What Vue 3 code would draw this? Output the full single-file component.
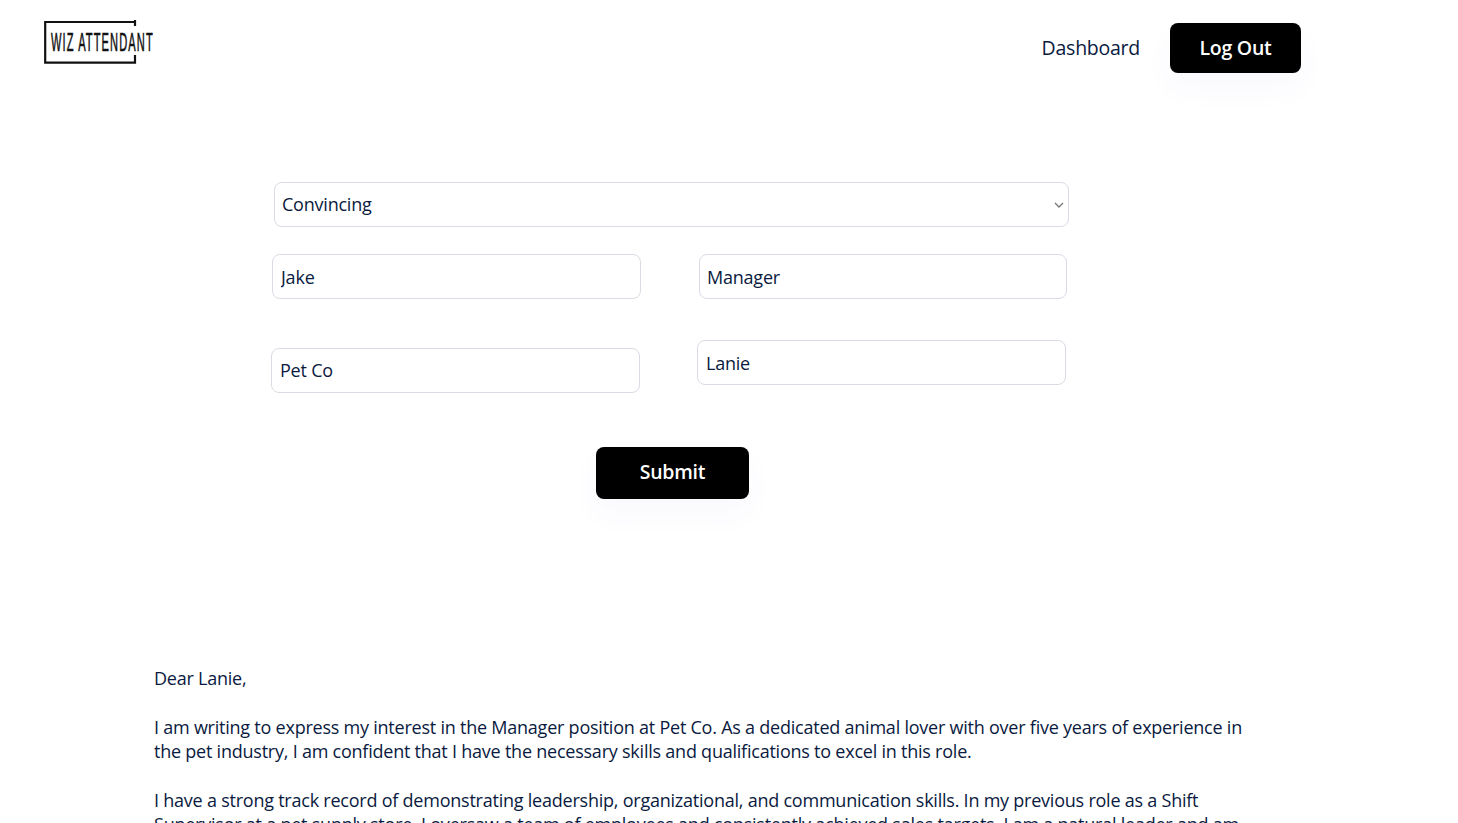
<script setup>
import { ref } from 'vue'
const tone = ref('Convincing')
const name = ref('Jake')
const role = ref('Manager')
const company = ref('Pet Co')
const recipient = ref('Lanie')
const paragraphs = [
  'Dear Lanie,',
  'I am writing to express my interest in the Manager position at Pet Co. As a dedicated animal lover with over five years of experience in the pet industry, I am confident that I have the necessary skills and qualifications to excel in this role.',
  'I have a strong track record of demonstrating leadership, organizational, and communication skills. In my previous role as a Shift Supervisor at a pet supply store, I oversaw a team of employees and consistently achieved sales targets. I am a natural leader and am'
]
</script>

<template>
  <div class="page">
    <header class="nav">
      <a class="logo" href="#">
        <svg class="logo-frame" width="110" height="44" viewBox="0 0 110 44" fill="none" aria-hidden="true">
          <path d="M91 2H1.2V42.6H91V35" stroke="#111" stroke-width="2.2" />
          <path d="M91 0V6" stroke="#111" stroke-width="2.2" />
        </svg>
        <span class="logo-text">WIZ ATTENDANT</span>
      </a>
      <nav class="links">
        <a class="link" href="#">Dashboard</a>
        <button class="btn logout" type="button">Log Out</button>
      </nav>
    </header>

    <form class="form" @submit.prevent>
      <div class="select-wrap">
        <select v-model="tone" class="field select">
          <option>Convincing</option>
          <option>Formal</option>
          <option>Friendly</option>
        </select>
        <svg class="chevron" width="10" height="6" viewBox="0 0 10 6" fill="none" aria-hidden="true">
          <path d="M1 1l4 4 4-4" stroke="#777" stroke-width="1.3" />
        </svg>
      </div>
      <div class="row row-one">
        <input v-model="name" class="field" type="text" />
        <input v-model="role" class="field role" type="text" />
      </div>
      <div class="row row-two">
        <input v-model="company" class="field company" type="text" />
        <input v-model="recipient" class="field recipient" type="text" />
      </div>
      <button class="btn submit" type="submit">Submit</button>
    </form>

    <section class="letter">
      <p v-for="p in paragraphs" :key="p">{{ p }}</p>
    </section>
  </div>
</template>

<style>
html, body { margin: 0; overflow: hidden; background: #fff; }
</style>

<style scoped>
.page {
  height: 823px;
  overflow: hidden;
  font-family: "Open Sans", sans-serif;
  color: #0a1a40;
}
.nav {
  display: flex;
  justify-content: space-between;
  align-items: flex-start;
  height: 182px;
  padding: 0 157px 0 44px;
  box-sizing: border-box;
}
.logo {
  position: relative;
  display: block;
  width: 110px;
  height: 44px;
  margin-top: 20px;
  color: #111;
  text-decoration: none;
}
.logo-frame { display: block; }
.logo-text {
  position: absolute;
  left: 7px;
  top: 6px;
  font-family: "Liberation Sans", sans-serif;
  font-size: 25px;
  line-height: 32px;
  letter-spacing: 2.5px;
  -webkit-text-stroke: 0.6px #111;
  white-space: nowrap;
  transform: scaleX(0.443);
  transform-origin: left center;
}
.links {
  display: flex;
  align-items: center;
  gap: 30px;
  margin-top: 23px;
}
.link {
  margin-top: -2px;
  font-size: 19.5px;
  letter-spacing: -0.25px;
  color: #0a1a40;
  text-decoration: none;
}
.btn {
  display: block;
  border: 0;
  border-radius: 8px;
  padding: 0 0 2px;
  background: #000;
  color: #fff;
  font-family: "Open Sans", sans-serif;
  font-weight: 600;
  font-size: 19.5px;
  letter-spacing: -0.25px;
  box-shadow: 0 15px 30px rgba(80, 90, 220, 0.035);
  cursor: pointer;
}
.logout { width: 131px; height: 50px; }
.form { display: flow-root; }
.field {
  display: block;
  width: 369px;
  height: 45px;
  box-sizing: border-box;
  padding: 0 8px;
  border: 1px solid #dcdae4;
  border-radius: 8px;
  background: #fff;
  color: #0a1a40;
  font-family: "Open Sans", sans-serif;
  font-size: 18px;
  letter-spacing: -0.22px;
  outline: none;
}
.select-wrap {
  position: relative;
  width: 795px;
  margin-left: 274px;
}
.select {
  width: 100%;
  padding: 0 7px 2px;
  appearance: none;
}
.chevron { position: absolute; right: 5px; top: 20px; pointer-events: none; }
.row { display: flex; align-items: flex-start; }
.row-one { gap: 58px; margin: 27px 0 0 272px; }
.row-one .field { padding-top: 1px; }
.row-one .role { width: 368px; padding-left: 7px; }
.row-two { gap: 57px; margin: 41px 0 0 271px; }
.company { margin-top: 8px; padding-bottom: 1px; }
.submit { width: 153px; height: 52px; margin: 54px 0 0 596px; padding-bottom: 4px; }
.letter {
  width: 1096px;
  margin: 167px 0 0 154px;
  font-size: 18px;
  line-height: 24px;
  letter-spacing: -0.23px;
}
.letter p { margin: 0 0 25px; }
</style>
